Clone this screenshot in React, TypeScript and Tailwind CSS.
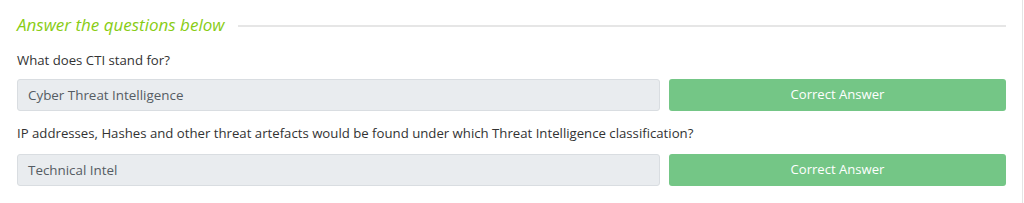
const questions = [
  { q: "What does CTI stand for?", a: "Cyber Threat Intelligence" },
  {
    q: "IP addresses, Hashes and other threat artefacts would be found under which Threat Intelligence classification?",
    a: "Technical Intel",
  },
];

export default function App() {
  return (
    <div className="h-[203px] w-[1024px] bg-white font-['Open_Sans',sans-serif] text-[#333]">
      <div className="h-full w-[1023px] border-r border-[#e4e4e4] pl-[17px] pr-[16px] pt-[14px]">
        <div className="flex items-center gap-[14px]">
          <h3 className="whitespace-nowrap text-[17px] italic leading-[22px] text-[#88cc14]">
            Answer the questions below
          </h3>
          <div className="mt-[1px] h-[2px] flex-1 bg-[#e6e6e6]" />
        </div>
        {questions.map((item, i) => (
          <div key={i} className={i === 0 ? "mt-[14px]" : "mt-[12px]"}>
            <p className="text-[13.2px] leading-[20px]">{item.q}</p>
            <div className={i === 0 ? "mt-[9px] flex gap-[9px]" : "mt-[11px] flex gap-[9px]"}>
              <div className="flex h-[32px] flex-1 items-center rounded-[3px] border border-[#d9dde1] bg-[#e9ecef] px-[10px] text-[13.4px] text-[#555c63]">
                {item.a}
              </div>
              <button className="h-[32px] w-[337px] rounded-[3px] bg-[#74c686] text-[13.1px] text-white">
                Correct Answer
              </button>
            </div>
          </div>
        ))}
      </div>
    </div>
  );
}
